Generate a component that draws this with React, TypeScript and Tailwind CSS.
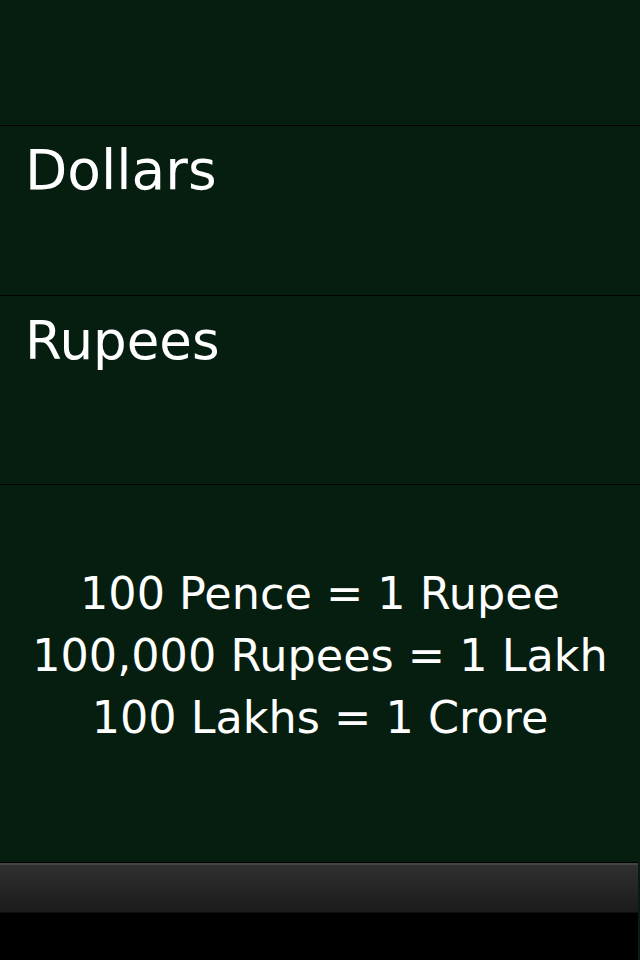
export default function App() {
  const font = { fontFamily: '"DejaVu Sans", "Noto Sans", sans-serif' };
  return (
    <div className="w-[640px] h-[960px] bg-[#061e10] flex flex-col text-white" style={font}>
      <div className="h-[125px] shrink-0" />
      <div className="h-[170px] shrink-0 border-t border-black pl-[25px] pt-[17px]">
        <div className="text-[55px] leading-[55px]">Dollars</div>
      </div>
      <div className="h-[189px] shrink-0 border-t border-black pl-[25px] pt-[18px]">
        <div className="text-[53px] leading-[53px]">Rupees</div>
      </div>
      <div className="h-[378px] shrink-0 border-t border-black pt-[78px] flex flex-col items-center">
        <div className="text-[44.5px] leading-[62px]">100 Pence = 1 Rupee</div>
        <div className="text-[44.5px] leading-[62px]">100,000 Rupees = 1 Lakh</div>
        <div className="text-[44.5px] leading-[62px]">100 Lakhs = 1 Crore</div>
      </div>
      <div className="w-[638px] flex-1 flex flex-col">
        <div className="h-[1px] bg-black" />
        <div className="h-[2px] bg-[#454545]" />
        <div className="h-[47px] bg-gradient-to-b from-[#303030] to-[#1b1b1b]" />
        <div className="h-[1px] bg-[#0f0f0f]" />
        <div className="flex-1 bg-black" />
      </div>
    </div>
  );
}
